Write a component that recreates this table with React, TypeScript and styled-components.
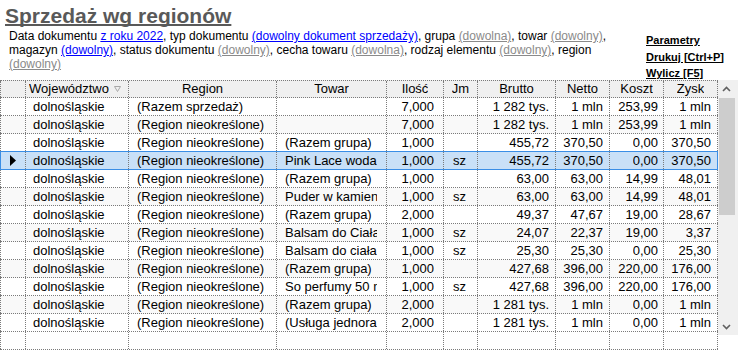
import React from 'react';
import styled, { createGlobalStyle } from 'styled-components';

const Global = createGlobalStyle`
  html, body { margin: 0; padding: 0; background: #fff; }
  body {
    font-family: "Liberation Sans", Arial, sans-serif;
    width: 738px;
    height: 356px;
    overflow: hidden;
    color: #000;
  }
`;

const Page = styled.div`
  display: flex;
  flex-direction: column;
  width: 738px;
  height: 356px;
  overflow: hidden;
`;

const Top = styled.header`
  display: flex;
  height: 80px;
`;

const Intro = styled.div`
  flex: 0 0 646px;
  display: flex;
  flex-direction: column;
  align-items: flex-start;
`;

const Title = styled.h1`
  margin: 0 0 0 4px;
  padding: 4px 0 0 1px;
  font-size: 21px;
  line-height: 24px;
  font-weight: bold;
  color: #595959;
  text-decoration: underline;
  text-decoration-thickness: 2px;
  text-underline-offset: 1px;
  text-decoration-skip-ink: none;
`;

const Desc = styled.p`
  margin: 1px 0 0 9px;
  width: 625px;
  font-size: 12px;
  line-height: 14px;
`;

const Filter = styled.span<{ $set?: boolean }>`
  color: ${(p) => (p.$set ? '#0000ff' : '#8a8a8a')};
  text-decoration: underline;
`;

const Actions = styled.nav`
  display: flex;
  flex-direction: column;
  padding-top: 32px;
`;

const Action = styled.span`
  font-size: 11px;
  line-height: 16.5px;
  font-weight: bold;
  text-decoration: underline;
  white-space: nowrap;
`;

const TableArea = styled.section`
  display: flex;
  align-items: flex-start;
`;

const Grid = styled.div`
  width: 718px;
  display: flex;
  flex-direction: column;
  font-size: 13px;
`;

const COLS = '26px 103px 148px 110px 57px 34px 78px 54px 54px 54px';

const Row = styled.div<{ $head?: boolean; $alt?: boolean; $sel?: boolean }>`
  position: relative;
  display: grid;
  grid-template-columns: ${COLS};
  height: 18px;
  box-sizing: border-box;
  border-top: ${(p) => (p.$head ? '1px dotted #7a7a7a' : 'none')};
  border-bottom: 1px dotted #7a7a7a;
  background: ${(p) => (p.$head ? '#f0f0f0' : p.$sel ? '#c9e0f7' : p.$alt ? '#f9f9f9' : '#fff')};
  &::after {
    content: '';
    display: ${(p) => (p.$sel ? 'block' : 'none')};
    position: absolute;
    left: 0;
    right: 0;
    top: -1px;
    bottom: -1px;
    border: 1px solid #3a8ee6;
    pointer-events: none;
  }
`;

const Cell = styled.div<{ $align?: string; $pl?: number; $pr?: number; $first?: boolean }>`
  box-sizing: border-box;
  min-width: 0;
  border-right: 1px dotted #7a7a7a;
  border-left: ${(p) => (p.$first ? '1px dotted #7a7a7a' : 'none')};
  padding-left: ${(p) => p.$pl ?? 0}px;
  padding-right: ${(p) => p.$pr ?? 0}px;
  line-height: 16px;
  display: flex;
  align-items: center;
  justify-content: ${(p) => (p.$align === 'right' ? 'flex-end' : p.$align === 'center' ? 'center' : 'flex-start')};
`;

const CellText = styled.span`
  display: block;
  min-width: 0;
  white-space: nowrap;
  overflow: hidden;
  text-overflow: clip;
`;

const SortMark = styled.svg`
  margin-left: 5px;
  flex: none;
`;

const Pointer = styled.svg`
  margin-left: 9px;
`;

const Scrollbar = styled.div`
  width: 20px;
  height: 255px;
  background: #f0f0f0;
  display: flex;
  flex-direction: column;
`;

const ScrollButton = styled.div`
  width: 17px;
  height: 17px;
  display: flex;
  align-items: center;
  justify-content: center;
`;

const Track = styled.div`
  flex: 1;
  padding: 1px 0 0 1px;
`;

const Thumb = styled.div`
  width: 16px;
  height: 117px;
  background: #cdcdcd;
`;

type Col = { title: string; align: 'left' | 'right' | 'center'; pl?: number; pr?: number };

const columns: Col[] = [
  { title: 'Województwo', align: 'left', pl: 7, pr: 4 },
  { title: 'Region', align: 'left', pl: 8, pr: 4 },
  { title: 'Towar', align: 'left', pl: 8, pr: 9 },
  { title: 'Ilość', align: 'right', pr: 9 },
  { title: 'Jm', align: 'left', pl: 9 },
  { title: 'Brutto', align: 'right', pr: 6 },
  { title: 'Netto', align: 'right', pr: 6 },
  { title: 'Koszt', align: 'right', pr: 5 },
  { title: 'Zysk', align: 'right', pr: 6 },
];

const W = 'dolnośląskie';
const R = '(Region nieokreślone)';

const data: string[][] = [
  [W, '(Razem sprzedaż)', '', '7,000', '', '1 282 tys.', '1 mln', '253,99', '1 mln'],
  [W, R, '', '7,000', '', '1 282 tys.', '1 mln', '253,99', '1 mln'],
  [W, R, '(Razem grupa)', '1,000', '', '455,72', '370,50', '0,00', '370,50'],
  [W, R, 'Pink Lace woda', '1,000', 'sz', '455,72', '370,50', '0,00', '370,50'],
  [W, R, '(Razem grupa)', '1,000', '', '63,00', '63,00', '14,99', '48,01'],
  [W, R, 'Puder w kamieniu', '1,000', 'sz', '63,00', '63,00', '14,99', '48,01'],
  [W, R, '(Razem grupa)', '2,000', '', '49,37', '47,67', '19,00', '28,67'],
  [W, R, 'Balsam do Ciała', '1,000', 'sz', '24,07', '22,37', '19,00', '3,37'],
  [W, R, 'Balsam do ciała', '1,000', 'sz', '25,30', '25,30', '0,00', '25,30'],
  [W, R, '(Razem grupa)', '1,000', '', '427,68', '396,00', '220,00', '176,00'],
  [W, R, 'So perfumy 50 ml', '1,000', 'sz', '427,68', '396,00', '220,00', '176,00'],
  [W, R, '(Razem grupa)', '2,000', '', '1 281 tys.', '1 mln', '0,00', '1 mln'],
  [W, R, '(Usługa jednorazowa)', '2,000', '', '1 281 tys.', '1 mln', '0,00', '1 mln'],
];

const SELECTED = 3;

export default function App() {
  return (
    <Page>
      <Global />
      <Top>
        <Intro>
          <Title>Sprzedaż wg regionów</Title>
          <Desc>
            Data dokumentu <Filter $set>z roku 2022</Filter>, typ dokumentu{' '}
            <Filter $set>(dowolny dokument sprzedaży)</Filter>, grupa <Filter>(dowolna)</Filter>, towar{' '}
            <Filter>(dowolny)</Filter>, magazyn <Filter $set>(dowolny)</Filter>, status dokumentu{' '}
            <Filter>(dowolny)</Filter>, cecha towaru <Filter>(dowolna)</Filter>, rodzaj elementu{' '}
            <Filter>(dowolny)</Filter>, region <Filter>(dowolny)</Filter>
          </Desc>
        </Intro>
        <Actions>
          <Action>Parametry</Action>
          <Action>Drukuj [Ctrl+P]</Action>
          <Action>Wylicz [F5]</Action>
        </Actions>
      </Top>
      <TableArea>
        <Grid>
          <Row $head>
            <Cell $first />
            {columns.map((c, i) => (
              <Cell key={c.title} $align={i === 0 ? 'left' : 'center'} $pl={i === 0 ? 3 : 0}>
                <CellText>{c.title}</CellText>
                {i === 0 && (
                  <SortMark width="7" height="6" viewBox="0 0 7 6">
                    <path d="M0.5 0.5 H6.5 L3.5 5.5 Z" fill="none" stroke="#a8a8a8" strokeWidth="1" />
                  </SortMark>
                )}
              </Cell>
            ))}
          </Row>
          {data.map((r, ri) => (
            <Row key={ri} $alt={ri % 2 === 1} $sel={ri === SELECTED}>
              <Cell $first>
                {ri === SELECTED && (
                  <Pointer width="6" height="11" viewBox="0 0 6 11">
                    <path d="M0 0 L6 5.5 L0 11 Z" fill="#000" />
                  </Pointer>
                )}
              </Cell>
              {columns.map((c, ci) => (
                <Cell key={ci} $align={c.align} $pl={c.pl} $pr={c.pr}>
                  <CellText>{r[ci]}</CellText>
                </Cell>
              ))}
            </Row>
          ))}
          <Row>
            <Cell $first />
            {columns.map((c, ci) => (
              <Cell key={ci} />
            ))}
          </Row>
        </Grid>
        <Scrollbar>
          <ScrollButton>
            <svg width="9" height="6" viewBox="0 0 9 6">
              <path d="M1 5 L4.5 1.5 L8 5" fill="none" stroke="#606060" strokeWidth="1.6" />
            </svg>
          </ScrollButton>
          <Track>
            <Thumb />
          </Track>
          <ScrollButton>
            <svg width="9" height="6" viewBox="0 0 9 6">
              <path d="M1 1 L4.5 4.5 L8 1" fill="none" stroke="#606060" strokeWidth="1.6" />
            </svg>
          </ScrollButton>
        </Scrollbar>
      </TableArea>
    </Page>
  );
}
